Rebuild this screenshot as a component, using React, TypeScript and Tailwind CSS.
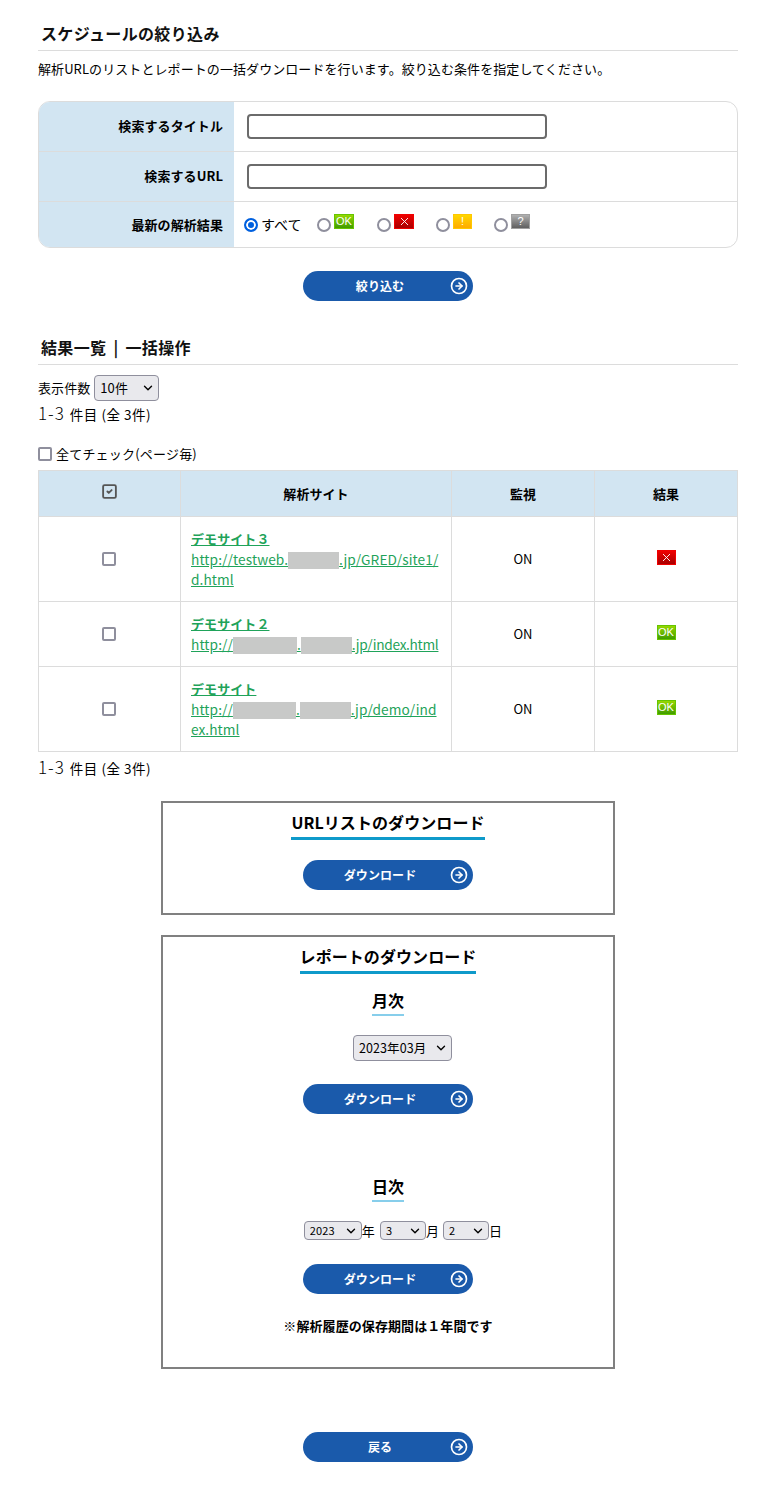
import { ChevronDown, CircleArrowRight, SquareCheck } from "lucide-react";

const font = "font-['Noto_Sans_CJK_JP','Noto_Sans',sans-serif]";

function Badge({ kind, wide }: { kind: "ok" | "ng" | "warn" | "unknown"; wide?: boolean }) {
  const styles = {
    ok: "from-[#96d800] to-[#3f9c00] border-[#66c400]",
    ng: "from-[#f00000] to-[#a80000] border-[#f00000]",
    warn: "from-[#ffd800] to-[#ffaa00] border-[#ffc800]",
    unknown: "from-[#b0b0b0] to-[#606060] border-[#a0a0a0]",
  };
  const labels = { ok: "OK", ng: "", warn: "!", unknown: "?" };
  return (
    <span className={`inline-flex ${wide ? "w-[20px]" : "w-[19px]"} h-[15px] items-center justify-center border bg-linear-to-b text-white text-[11px] leading-none font-['Liberation_Sans',sans-serif] ${styles[kind]}`}>
      {kind === "ng" ? (
        <svg width="9" height="9" viewBox="0 0 9 9" stroke="#fff" strokeWidth="0.9">
          <path d="M1 1l7 7M8 1l-7 7" />
        </svg>
      ) : (
        labels[kind]
      )}
    </span>
  );
}

function ArrowButton({ label }: { label: string }) {
  return (
    <button className="relative block w-[170px] h-[30px] mx-auto rounded-full bg-[#1a5aab] text-white text-[12px] font-bold pr-4">
      {label}
      <CircleArrowRight className="absolute right-[5px] top-[6px] w-[18px] h-[18px]" strokeWidth={2.2} />
    </button>
  );
}

function Heading({ children, className }: { children: React.ReactNode; className?: string }) {
  return (
    <h2 className={`border-b border-[#dcdcdc] pl-[3px] h-[30px] leading-[24px] text-[16px] font-bold text-[#111] tracking-[0.35px] ${className ?? ""}`}>
      {children}
    </h2>
  );
}

function BoxTitle({ children }: { children: React.ReactNode }) {
  return (
    <div className="text-center">
      <span className="inline-block border-b-[3px] border-[#0e9aca] text-[16px] font-bold leading-[24px] pb-[3px]">{children}</span>
    </div>
  );
}

function SubTitle({ children }: { children: React.ReactNode }) {
  return (
    <div className="text-center">
      <span className="inline-block border-b-2 border-[#87ceeb] text-[16px] font-bold leading-[24px] pb-[2px]">{children}</span>
    </div>
  );
}

function Redact({ w }: { w: number }) {
  return <span className="inline-block h-[17px] bg-[#c8c9c8] align-[-4px]" style={{ width: w }} />;
}

function Select({ className, value }: { className: string; value: string }) {
  return (
    <span className="relative inline-flex">
      <select className={`appearance-none bg-[#e9e9ed] border border-[#8f8f9d] rounded-[4px] text-black pl-[5px] ${className}`}>
        <option>{value}</option>
      </select>
      <ChevronDown className="absolute right-[4px] top-1/2 -translate-y-1/2 w-[14px] h-[14px] pointer-events-none" strokeWidth={2.4} />
    </span>
  );
}

const radioClass =
  "appearance-none w-[14px] h-[14px] rounded-full border-2 border-[#8f8f9d] checked:border-[#0060df] checked:bg-[#0060df] checked:shadow-[inset_0_0_0_2px_#fff]";
const checkClass = "appearance-none w-[14px] h-[14px] rounded-[2px] border-2 border-[#8f8f9d]";

const rows = [
  {
    name: "デモサイト３",
    url: <>http://testweb.<Redact w={51} />.jp/GRED/site1/d.html</>,
    badge: "ng" as const,
    h: "h-[85px]",
  },
  {
    name: "デモサイト２",
    url: <>http://<Redact w={64} />.<Redact w={51} /><span className="tracking-[-0.3px]">.jp/index.html</span></>,
    badge: "ok" as const,
    h: "h-[65px]",
  },
  {
    name: "デモサイト",
    url: <>http://<Redact w={63} />.<Redact w={51} />.jp/demo/index.html</>,
    badge: "ok" as const,
    h: "h-[85px]",
  },
];

function Count() {
  return (
    <>
      <span className="text-[17px] tracking-[1px] font-light">1-3</span>{" "}
      <span className="ml-[2px] text-[13.5px] tracking-[0.5px]">件目 (全 3件)</span>
    </>
  );
}

export default function App() {
  return (
    <div className={`${font} w-[778px] h-[1506px] bg-white text-black pl-[38px] pr-[40px] pt-[21px] text-[13px] tracking-[0.08px]`}>
      <Heading>スケジュールの絞り込み</Heading>
      <p className="mt-[8px] leading-[20px]">
        解析URLのリストとレポートの一括ダウンロードを行います。絞り込む条件を指定してください。
      </p>

      <div className="mt-[22px] border border-[#dcdcdc] rounded-[12px] overflow-hidden">
        {[
          { label: "検索するタイトル", h: "h-[50px]" },
          { label: "検索するURL", h: "h-[50px]" },
        ].map((r) => (
          <div key={r.label} className={`flex ${r.h} border-b border-[#dcdcdc]`}>
            <div className="w-[195px] bg-[#d2e5f2] flex items-center justify-end pr-[11px] font-bold text-[13px] pb-[1px]">{r.label}</div>
            <div className="flex-1 flex items-center pl-[13px]">
              <input type="text" className="w-[300px] h-[25px] border-2 border-[#6b6b6b] rounded-[4px]" />
            </div>
          </div>
        ))}
        <div className="flex h-[45px]">
          <div className="w-[195px] bg-[#d2e5f2] flex items-center justify-end pr-[11px] font-bold text-[13px]">最新の解析結果</div>
          <div className="flex-1 flex items-center pl-[10px] text-[14px]">
            <input type="radio" name="r" defaultChecked className={radioClass} />
            <span className="ml-[3px] w-[56px]">すべて</span>
            <input type="radio" name="r" className={radioClass} />
            <span className="ml-[3px] w-[43px] -mt-[6px] flex"><Badge kind="ok" wide /></span>
            <input type="radio" name="r" className={radioClass} />
            <span className="ml-[3px] w-[42px] -mt-[6px] flex"><Badge kind="ng" wide /></span>
            <input type="radio" name="r" className={radioClass} />
            <span className="ml-[3px] w-[41px] -mt-[6px] flex"><Badge kind="warn" /></span>
            <input type="radio" name="r" className={radioClass} />
            <span className="ml-[3px] -mt-[6px] flex"><Badge kind="unknown" /></span>
          </div>
        </div>
      </div>

      <div className="mt-[23px]">
        <ArrowButton label="絞り込む" />
      </div>

      <Heading className="mt-[34px] [word-spacing:3px]">結果一覧 | 一括操作</Heading>

      <div className="mt-[10px] flex items-center h-[26px]">
        <span className="mr-[4px]">表示件数</span>
        <Select className="w-[65px] h-[26px] text-[13px]" value="10件" />
      </div>
      <div className="leading-[23px]">
        <Count />
      </div>

      <label className="mt-[18px] flex items-center h-[20px]">
        <input type="checkbox" className={checkClass} />
        <span className="ml-[4px] tracking-[0.2px]">全てチェック(ページ毎)</span>
      </label>

      <table className="mt-[6px] w-[700px] table-fixed border-collapse text-[13px]">
        <thead>
          <tr className="h-[46px] bg-[#d2e5f2] font-bold">
            <th className="w-[142px] border border-[#dcdcdc]">
              <SquareCheck className="w-[17px] h-[17px] mx-auto -mt-[5px] text-[#555]" strokeWidth={2.6} />
            </th>
            <th className="w-[271px] border border-[#dcdcdc] font-bold">解析サイト</th>
            <th className="w-[143px] border border-[#dcdcdc] font-bold">監視</th>
            <th className="border border-[#dcdcdc] font-bold">結果</th>
          </tr>
        </thead>
        <tbody>
          {rows.map((r) => (
            <tr key={r.name} className={r.h}>
              <td className="border border-[#dcdcdc] text-center">
                <input type="checkbox" className={`${checkClass} block mx-auto -translate-x-px`} />
              </td>
              <td className="border border-[#dcdcdc] pl-[10px] pr-[9px] text-[13.7px] leading-[20px] break-all text-[#1fa35a]">
                <a className="underline font-bold block text-[13px]">{r.name}</a>
                <a className="underline">{r.url}</a>
              </td>
              <td className="border border-[#dcdcdc] text-center">ON</td>
              <td className="border border-[#dcdcdc] text-center">
                <span className="inline-flex -mt-[6px] align-middle"><Badge kind={r.badge} /></span>
              </td>
            </tr>
          ))}
        </tbody>
      </table>

      <div className="leading-[24px] mt-[3px]">
        <Count />
      </div>

      <div className="mt-[20px] ml-[123px] w-[454px] h-[114px] border-2 border-[#808080] pt-[7px]">
        <BoxTitle>URLリストのダウンロード</BoxTitle>
        <div className="mt-[20px]">
          <ArrowButton label="ダウンロード" />
        </div>
      </div>

      <div className="mt-[20px] ml-[123px] w-[454px] h-[434px] border-2 border-[#808080] pt-[7px]">
        <BoxTitle>レポートのダウンロード</BoxTitle>
        <div className="mt-[14px]">
          <SubTitle>月次</SubTitle>
        </div>
        <div className="mt-[19px] flex justify-center ml-[29px]">
          <Select className="w-[99px] h-[26px] text-[12.5px]" value="2023年03月" />
        </div>
        <div className="mt-[23px]">
          <ArrowButton label="ダウンロード" />
        </div>
        <div className="mt-[60px]">
          <SubTitle>日次</SubTitle>
        </div>
        <div className="mt-[19px] flex justify-center items-center h-[19px] ml-[30px]">
          <Select className="w-[58px] h-[19px] text-[11px]" value="2023" />
          <span>年</span>
          <span className="ml-[5px] inline-flex"><Select className="w-[46px] h-[19px] text-[11px]" value="3" /></span>
          <span>月</span>
          <span className="ml-[4px] inline-flex"><Select className="w-[46px] h-[19px] text-[11px]" value="2" /></span>
          <span>日</span>
        </div>
        <div className="mt-[24px]">
          <ArrowButton label="ダウンロード" />
        </div>
        <p className="mt-[22px] text-center font-bold text-[13px] leading-[20px]">※解析履歴の保存期間は１年間です</p>
      </div>

      <div className="mt-[63px]">
        <ArrowButton label="戻る" />
      </div>
    </div>
  );
}
